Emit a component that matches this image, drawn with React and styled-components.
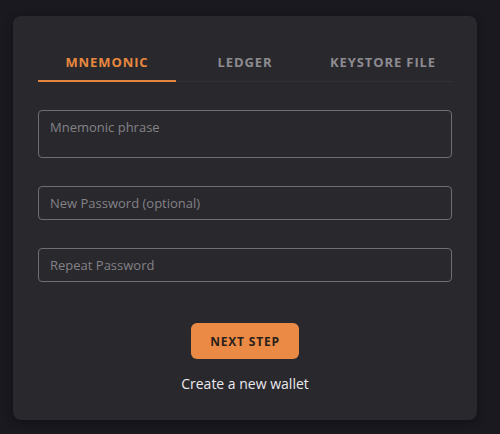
import { useState } from 'react';
import styled, { createGlobalStyle } from 'styled-components';

const GlobalStyle = createGlobalStyle`
  html, body {
    margin: 0;
    padding: 0;
    background: #1a1920;
    font-family: 'Open Sans', 'Liberation Sans', sans-serif;
  }
`;

const tabs = ['Mnemonic', 'Ledger', 'Keystore file'];

const App = () => {
  const [active, setActive] = useState(0);

  return (
    <Page>
      <GlobalStyle />
      <Card>
        <TabBar>
          {tabs.map((tab, i) => (
            <Tab key={tab} $active={i === active} onClick={() => setActive(i)}>
              {tab}
            </Tab>
          ))}
        </TabBar>
        <Fields>
          <TextArea placeholder="Mnemonic phrase" />
          <Input type="password" placeholder="New Password (optional)" />
          <Input type="password" placeholder="Repeat Password" />
        </Fields>
        <Actions>
          <NextButton>Next step</NextButton>
          <CreateLink>Create a new wallet</CreateLink>
        </Actions>
      </Card>
    </Page>
  );
};

const Page = styled.div`
  width: 500px;
  height: 434px;
  padding: 16px 23px 14px 13px;
  box-sizing: border-box;
`;

const Card = styled.div`
  height: 100%;
  box-sizing: border-box;
  background: #29282d;
  border-radius: 8px;
  padding: 34px 25px 0;
  box-shadow: 0 2px 8px rgba(0, 0, 0, 0.35);
`;

const TabBar = styled.div`
  display: grid;
  grid-template-columns: repeat(3, 1fr);
  border-bottom: 1px solid #323137;
`;

const Tab = styled.button`
  background: none;
  border: none;
  border-bottom: 2px solid ${(p) => (p.$active ? '#e5843c' : 'transparent')};
  margin-bottom: -1px;
  height: 32px;
  padding: 0 0 7px;
  font-family: inherit;
  font-size: 13px;
  font-weight: 700;
  letter-spacing: 0.9px;
  text-transform: uppercase;
  color: ${(p) => (p.$active ? '#e8883f' : '#8d8c91')};
  cursor: pointer;
`;

const Fields = styled.div`
  display: flex;
  flex-direction: column;
  gap: 28px;
  margin-top: 28px;
`;

const fieldStyles = `
  box-sizing: border-box;
  width: 100%;
  background: transparent;
  border: 1px solid #6f6e74;
  border-radius: 4px;
  padding: 0 11px;
  font-family: 'Open Sans', 'Liberation Sans', sans-serif;
  font-size: 13px;
  color: #d8d7dc;
  outline: none;

  &::placeholder {
    color: #838287;
  }
`;

const TextArea = styled.textarea`
  ${fieldStyles}
  height: 48px;
  padding-top: 7px;
  resize: none;
`;

const Input = styled.input`
  ${fieldStyles}
  height: 34px;
`;

const Actions = styled.div`
  display: flex;
  flex-direction: column;
  align-items: center;
  margin-top: 41px;
  gap: 15px;
`;

const NextButton = styled.button`
  width: 108px;
  height: 36px;
  border: none;
  border-radius: 6px;
  background: #ea8a45;
  color: #2a1f1a;
  font-family: inherit;
  font-size: 12px;
  font-weight: 700;
  letter-spacing: 0.8px;
  text-transform: uppercase;
  cursor: pointer;
`;

const CreateLink = styled.a`
  font-size: 14px;
  color: #ebeaef;
  cursor: pointer;
`;

export default App;
